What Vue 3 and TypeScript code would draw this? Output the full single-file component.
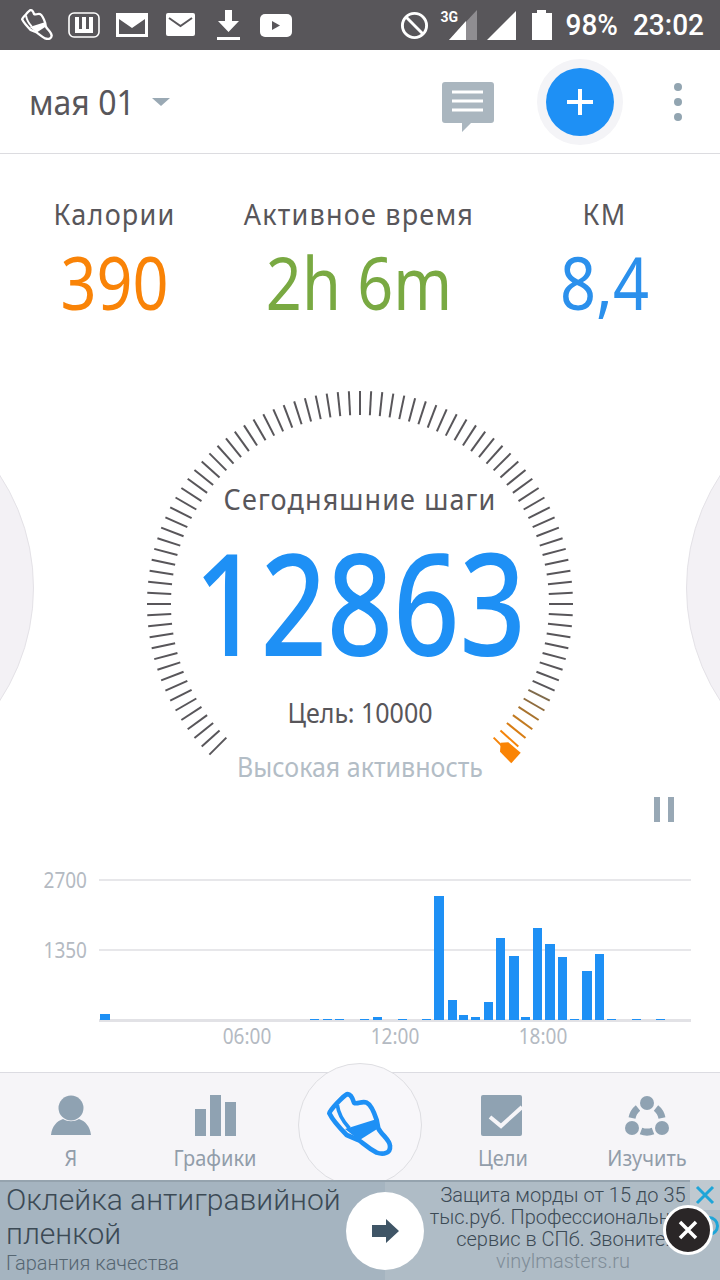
<template>
  <div class="screen">
    <div class="statusbar">
      <div class="status-left">
        <svg width="34" height="34" viewBox="975 90 210 210"><path :d="shoeOutline" fill="none" stroke="#fff" stroke-width="14" stroke-linejoin="round"/><path :d="shoeInner" fill="none" stroke="#fff" stroke-width="12"/><path :d="shoeBand" fill="#fff"/></svg>
        <svg width="32" height="26" viewBox="0 0 32 26"><rect x="1" y="1" width="30" height="24" rx="5" fill="none" stroke="#fff" stroke-width="1.6"/><path d="M7 5h4v12h3V5h4v12h3V5h4v16H7z" fill="#fff"/></svg>
        <svg width="32" height="24" viewBox="0 0 32 24"><path d="M0 0h32v24H0z" fill="#fff"/><path d="M3 6l13 9 13-9v15H3z" fill="#58565a"/></svg>
        <svg width="29" height="24" viewBox="0 0 29 24"><rect width="29" height="23" rx="2" fill="#fff"/><path d="M3 5l11.500 8L26 5" fill="none" stroke="#58565a" stroke-width="2"/></svg>
        <svg width="24" height="31" viewBox="0 0 24 31"><path d="M8 0h7v11h7L11.500 22 1 11h7z" fill="#fff"/><rect y="27" width="23" height="3" fill="#fff"/></svg>
        <svg width="32" height="23" viewBox="0 0 32 23"><rect width="32" height="23" rx="5" fill="#fff"/><path d="M12 7l8 4.500-8 4.500z" fill="#58565a"/></svg>
      </div>
      <div class="status-right">
        <svg class="no-sign" width="29" height="29" viewBox="0 0 30 30"><circle cx="15" cy="15" r="12.500" fill="none" stroke="#fff" stroke-width="3"/><path d="M6 6l18 18" stroke="#fff" stroke-width="3"/></svg>
        <div class="net">
          <span class="net-label">3G</span>
          <svg width="28" height="30" viewBox="0 0 28 30"><path d="M28 0v30H0z" fill="#8f8d91"/><path d="M17 11v19H0z" fill="#fff"/></svg>
        </div>
        <svg class="sig" width="29" height="29" viewBox="0 0 29 29"><path d="M29 0v29H0z" fill="#fff"/></svg>
        <svg class="bat" width="20" height="30" viewBox="0 0 20 30"><path d="M5 0h9v3h6v27H0V3h5z" fill="#fff"/></svg>
        <span class="s-text pct">98%</span>
        <span class="s-text time">23:02</span>
      </div>
    </div>

    <header class="topbar">
      <div class="date">
        <span class="date-text">мая 01</span>
        <i class="caret"></i>
      </div>
      <div class="actions">
        <svg class="comment" width="52" height="50" viewBox="0 0 52 50"><path d="M3 0h46a3 3 0 0 1 3 3v35a3 3 0 0 1-3 3H29l-9 9v-9H3a3 3 0 0 1-3-3V3a3 3 0 0 1 3-3z" fill="#aab6bf"/><path d="M10 10h31M10 19h31M10 28h31" stroke="#fff" stroke-width="3"/></svg>
        <button class="fab"><span class="fab-h"></span><span class="fab-v"></span></button>
        <div class="dots"><i></i><i></i><i></i></div>
      </div>
    </header>

    <section class="stats">
      <div v-for="s in stats" :key="s.label" class="stat" :style="{ width: s.w + 'px' }">
        <span class="stat-label">{{ s.label }}</span>
        <span class="stat-value" :style="{ color: s.color }">{{ s.value }}</span>
      </div>
    </section>

    <section class="gauge">
      <i class="side side-l"></i>
      <i class="side side-r"></i>
      <svg class="dial" width="440" height="400" viewBox="0 0 440 400">
        <line v-for="t in ticks" :key="t.k" :x1="t.x1" :y1="t.y1" :x2="t.x2" :y2="t.y2" :stroke="t.c" stroke-width="2" />
        <path d="M360.700 352.700 368.300 352.300 380.700 362.700 371.300 373.300 360 361.700z" fill="#fa8405" />
      </svg>
      <div class="gauge-text">
        <span class="g-title">Сегодняшние шаги</span>
        <span class="g-steps">12863</span>
        <span class="g-goal">Цель: 10000</span>
        <span class="g-level">Высокая активность</span>
      </div>
    </section>

    <div class="pause-row"><i></i><i></i></div>

    <section class="chart">
      <div class="plot">
        <div class="grid-line"><span>2700</span></div>
        <div class="grid-line"><span>1350</span></div>
        <div class="bars">
          <i v-for="b in bars" :key="b.x" :style="{ left: b.x + 'px', width: b.w + 'px', height: b.h + 'px' }"></i>
        </div>
      </div>
      <div class="hours"><span>06:00</span><span>12:00</span><span>18:00</span></div>
    </section>

    <nav class="tabs">
      <div class="tab">
        <svg width="42" height="41" viewBox="0 0 42 41"><circle cx="21" cy="13" r="12.500" fill="#8fa2b2"/><path d="M1 40c1-9 6-14 12-16 5 3 11 3 16 0 6 2 11 7 12 16z" fill="#8fa2b2"/></svg>
        <span>Я</span>
      </div>
      <div class="tab">
        <svg width="42" height="41" viewBox="0 0 42 41"><path d="M1 14h11v27H1zM16 0h11v41H16zM31 7h11v34H31z" fill="#8fa2b2"/></svg>
        <span>Графики</span>
      </div>
      <div class="tab tab-main">
        <div class="main-circle">
          <svg width="70" height="70" viewBox="975 90 210 210"><path :d="shoeOutline" fill="none" stroke="#1e90f5" stroke-width="14" stroke-linejoin="round"/><path :d="shoeInner" fill="none" stroke="#1e90f5" stroke-width="11"/><path :d="shoeBand" fill="#1e90f5"/></svg>
        </div>
      </div>
      <div class="tab tab-goal">
        <svg width="42" height="41" viewBox="0 0 42 41"><rect x="1" width="41" height="41" rx="2" fill="#8fa2b2"/><path d="M10 22l11 9L42 12" fill="none" stroke="#f6f5f8" stroke-width="4"/></svg>
        <span>Цели</span>
      </div>
      <div class="tab tab-learn">
        <svg width="44" height="41" viewBox="0 0 44 41"><circle cx="22" cy="8" r="7" fill="#8fa2b2"/><circle cx="7" cy="33" r="7" fill="#8fa2b2"/><circle cx="37" cy="33" r="7" fill="#8fa2b2"/><path d="M13 13a17 17 0 0 0-6 10M31 13a17 17 0 0 1 6 10M16 36a17 17 0 0 0 12 0" fill="none" stroke="#8fa2b2" stroke-width="7"/></svg>
        <span>Изучить</span>
      </div>
    </nav>

    <aside class="ad">
      <div class="ad-left">
        <div class="ad-head">Оклейка антигравийной пленкой</div>
        <div class="ad-sub">Гарантия качества</div>
      </div>
      <div class="ad-go">
        <svg width="28" height="24" viewBox="0 0 28 24"><path d="M0 6h14V0l13 12-13 12v-6H0z" fill="#3f5566"/></svg>
      </div>
      <div class="ad-right">
        <div class="ad-copy">Защита морды от 15 до 35 тыс.руб. Профессиональный сервис в СПб. Звоните!</div>
        <div class="ad-url">vinylmasters.ru</div>
      </div>
      <div class="ad-corner">
        <svg width="20" height="20" viewBox="0 0 20 20"><path d="M2 2l16 16M18 2L2 18" stroke="#1ea5d8" stroke-width="3"/></svg>
      </div>
      <i class="ad-info"></i>
      <div class="close">
        <svg width="22" height="22" viewBox="0 0 22 22"><path d="M3 3l16 16M19 3L3 19" stroke="#fff" stroke-width="3.500"/></svg>
      </div>
    </aside>
  </div>
</template>

<script setup lang="ts">
const stats = [
  { label: 'Калории', value: '390', color: '#f98307', w: 229 },
  { label: 'Активное время', value: '2h 6m', color: '#79a942', w: 260 },
  { label: 'КМ', value: '8,4', color: '#2b90ec', w: 231 }
]

// shoe coordinates are taken at 3x, hence the odd viewBox
const shoeOutline = 'M988 160C990 150 1030 108 1040 103C1052 100 1058 115 1062 128C1070 135 1085 122 1100 128C1115 135 1125 165 1130 180L1135 205C1145 225 1170 240 1170 258C1172 280 1150 285 1130 278C1100 262 1085 245 1075 240L1040 225C1020 205 1000 185 988 160Z'
const shoeInner = 'M1012 135C1015 160 1030 185 1048 205'
const shoeBand = 'M1035 207 1128 178 1135 205 1078 241Z'

// 91 ticks over 270 degrees, the last few fade into orange
const ticks = Array.from({ length: 91 }, (_, i) => {
  const a = ((135 + i * 3) * Math.PI) / 180
  const cx = 220
  const cy = 214
  const left = 90 - i
  let c = '#58565a'
  if (left === 6) c = '#7f6b4c'
  if (left === 5) c = '#8f6c3e'
  if (left === 4) c = '#a8732e'
  if (left === 3) c = '#c27a20'
  if (left === 2) c = '#d87d14'
  if (left <= 1) c = '#f5840a'
  return {
    k: i,
    x1: cx + Math.cos(a) * 189,
    y1: cy + Math.sin(a) * 189,
    x2: cx + Math.cos(a) * 213,
    y2: cy + Math.sin(a) * 213,
    c
  }
})

// x relative to the plot, h in px above the axis
const bars = [
  { x: 1, w: 10, h: 6 },
  { x: 211, w: 9, h: 1 }, { x: 224, w: 9, h: 1 }, { x: 236, w: 9, h: 1 },
  { x: 261, w: 9, h: 1 }, { x: 274, w: 9, h: 3 }, { x: 299, w: 9, h: 1 },
  { x: 323, w: 9, h: 1 },
  { x: 335, w: 10, h: 124 }, { x: 349, w: 9, h: 20 }, { x: 360, w: 9, h: 5 },
  { x: 372, w: 9, h: 3 }, { x: 385, w: 9, h: 18 }, { x: 397, w: 9, h: 82 },
  { x: 410, w: 10, h: 64 }, { x: 422, w: 9, h: 3 }, { x: 434, w: 9, h: 92 },
  { x: 446, w: 10, h: 76 }, { x: 459, w: 9, h: 63 }, { x: 471, w: 9, h: 1 },
  { x: 483, w: 10, h: 49 }, { x: 496, w: 9, h: 66 }, { x: 508, w: 9, h: 1 },
  { x: 533, w: 9, h: 1 }, { x: 557, w: 9, h: 1 }
]
</script>

<style>
body {
  background: #fff;
}
</style>

<style scoped>
.screen {
  width: 720px;
  height: 1280px;
  overflow: hidden;
  display: flex;
  flex-direction: column;
  position: relative;
  background: #fff;
  font-family: "Noto Sans", "Open Sans", sans-serif;
  color: #58565a;
}
.statusbar {
  height: 50px;
  flex: none;
  background: #58565a;
  display: flex;
  justify-content: space-between;
  align-items: center;
  padding: 0 16px 0 20px;
}
.status-left {
  display: flex;
  align-items: center;
}
.status-left svg:nth-child(2) { margin-left: 14px; }
.status-left svg:nth-child(3) { margin-left: 16px; }
.status-left svg:nth-child(4) { margin-left: 18px; }
.status-left svg:nth-child(5) { margin-left: 22px; }
.status-left svg:nth-child(6) { margin-left: 19px; }
.status-right {
  display: flex;
  align-items: center;
  color: #fff;
}
.net {
  position: relative;
  width: 28px;
  height: 30px;
  margin-left: 20px;
}
.net-label {
  position: absolute;
  left: -8px;
  top: -1px;
  font: 700 14px "Roboto", sans-serif;
}
.sig { margin-left: 10px; }
.bat { margin-left: 16px; }
.s-text {
  font: 500 28px "Roboto", sans-serif;
  transform: scaleY(1.05);
}
.pct { margin-left: 14px; }
.time { margin-left: 15px; }
.topbar {
  height: 104px;
  flex: none;
  box-sizing: border-box;
  border-bottom: 1px solid #dcdce0;
  display: flex;
  align-items: center;
  justify-content: space-between;
  padding: 0 38px 0 29px;
}
.date {
  display: flex;
  align-items: center;
  gap: 17px;
  font-size: 32px;
}
.date-text {
  transform: scaleY(1.08);
}
.caret {
  width: 0;
  height: 0;
  border: 9px solid transparent;
  border-top: 8px solid #9aa9b4;
  border-bottom: 0;
}
.actions {
  display: flex;
  align-items: center;
}
.comment {
  margin-top: 10px;
}
.fab {
  position: relative;
  width: 68px;
  height: 68px;
  padding: 0;
  margin: 0 60px 0 52px;
  border: 0;
  border-radius: 50%;
  background: #1e90f5;
  box-shadow: 0 0 0 9px #f4f4f7;
}
.fab-h, .fab-v {
  position: absolute;
  background: #fff;
  left: 21px;
  top: 32px;
  width: 26px;
  height: 4px;
}
.fab-v {
  left: 32px;
  top: 21px;
  width: 4px;
  height: 26px;
}
.dots {
  display: flex;
  flex-direction: column;
  gap: 7px;
}
.dots i {
  width: 8px;
  height: 8px;
  border-radius: 50%;
  background: #92a5b1;
}
.stats {
  flex: none;
  display: flex;
  padding-top: 41px;
  height: 190px;
  box-sizing: border-box;
}
.stat {
  display: flex;
  flex-direction: column;
  align-items: center;
}
.stat-label {
  font-size: 27px;
  line-height: 38px;
  letter-spacing: 1.200px;
  transform: scaleY(1.08);
}
.stat-value {
  font-size: 63px;
  line-height: 56px;
  margin-top: 21px;
  transform: scaleY(1.17);
}
.gauge {
  position: relative;
  flex: none;
  height: 444px;
  display: grid;
  justify-items: center;
}
.dial, .gauge-text {
  grid-area: 1 / 1;
}
.dial {
  margin-top: 46px;
}
.side {
  position: absolute;
  top: 38px;
  width: 412px;
  height: 412px;
  box-sizing: border-box;
  border-radius: 50%;
  border: 1px solid #e4e2e7;
  background: #f3f1f5;
}
.side-l {
  left: -378px;
}
.side-r {
  right: -378px;
}
.gauge-text {
  z-index: 1;
  display: flex;
  flex-direction: column;
  align-items: center;
  padding-top: 136px;
}
.g-title {
  font-size: 27px;
  line-height: 38px;
  letter-spacing: 1.100px;
  transform: scaleY(1.08);
}
.g-steps {
  font-size: 116px;
  font-weight: 500;
  line-height: 110px;
  color: #1e90f5;
  margin-top: 28px;
  transform: scaleY(1.23);
}
.g-goal {
  font-size: 25px;
  line-height: 36px;
  margin-top: 38px;
  transform: scaleY(1.08);
}
.g-level {
  font-size: 25px;
  line-height: 36px;
  color: #b3bdc6;
  margin-top: 18px;
  transform: scaleY(1.08);
}
.pause-row {
  flex: none;
  height: 70px;
  box-sizing: border-box;
  padding: 9px 46px 0 0;
  display: flex;
  justify-content: flex-end;
  gap: 8px;
}
.pause-row i {
  width: 6px;
  height: 25px;
  background: #98a8b5;
}
.chart {
  flex: none;
  height: 214px;
  box-sizing: border-box;
  padding: 21px 29px 0 99px;
}
.plot {
  position: relative;
  height: 140px;
  border-bottom: 3px solid #e2e2e6;
  box-sizing: content-box;
}
.grid-line {
  height: 70px;
  border-top: 2px solid #e7e7ea;
  box-sizing: border-box;
  position: relative;
}
.grid-line span {
  position: absolute;
  right: 100%;
  top: -14px;
  margin-right: 12px;
  font-size: 19px;
  line-height: 26px;
  color: #b4bac2;
  transform: scaleY(1.12);
}
.bars {
  position: absolute;
  inset: 0 0 -1px 0;
}
.bars i {
  position: absolute;
  bottom: 0;
  background: #1e90f5;
}
.hours {
  display: flex;
  padding-left: 74px;
  font-size: 19px;
  line-height: 28px;
  color: #b4bac2;
}
.hours span {
  width: 148px;
  flex: none;
  text-align: center;
  transform: scaleY(1.12);
}
.tabs {
  flex: none;
  height: 108px;
  box-sizing: border-box;
  background: #f6f5f8;
  border-top: 1px solid #dcdce2;
  display: flex;
  padding-top: 22px;
}
.tab {
  width: 144px;
  flex: none;
  display: flex;
  flex-direction: column;
  align-items: center;
  font-size: 20px;
  color: #929daa;
}
.tab:first-child {
  margin-left: -1px;
}
.tab span {
  line-height: 28px;
  margin-top: 8px;
  transform: scaleY(1.1);
}
.tab-main {
  width: 124px;
  position: relative;
  margin: 0 7px 0 11px;
}
.tab-goal span {
  margin-left: 4px;
}
.tab-learn {
  margin-left: 2px;
}
.main-circle {
  position: absolute;
  top: -32px;
  left: 0;
  width: 124px;
  height: 124px;
  box-sizing: border-box;
  border-radius: 50%;
  border: 1px solid #dedee2;
  background: #f8f7fa;
  display: flex;
  align-items: center;
  justify-content: center;
}
.ad {
  flex: none;
  height: 100px;
  position: relative;
  background: #a5b4c0;
  box-shadow: inset 0 2px 0 #95a3ae;
  display: flex;
  font-family: "Roboto", sans-serif;
  font-weight: 300;
  color: #3c4a55;
}
.ad-left {
  width: 346px;
  flex: none;
  box-sizing: border-box;
  padding: 3px 0 0 6px;
}
.ad-head {
  font-size: 30px;
  line-height: 34px;
}
.ad-sub {
  font-size: 20px;
  line-height: 24px;
  color: #566672;
}
.ad-go {
  position: absolute;
  left: 346px;
  top: 12px;
  width: 78px;
  height: 78px;
  border-radius: 50%;
  background: #fff;
  display: flex;
  align-items: center;
  justify-content: center;
  z-index: 1;
  padding-left: 2px;
  box-sizing: border-box;
}
.ad-right {
  margin: 2px 0 0 39px;
  flex: 1;
  background: #afbcc6;
  padding: 2px 18px 0 39px;
  text-align: center;
  font-size: 20px;
  line-height: 22px;
}
.ad-url {
  color: #7f8d98;
}
.ad-corner {
  position: absolute;
  right: 0;
  top: 0;
  width: 30px;
  height: 30px;
  background: #c0c9d0;
  display: flex;
  align-items: center;
  justify-content: center;
}
.ad-info {
  position: absolute;
  right: 1px;
  top: 36px;
  width: 20px;
  height: 20px;
  box-sizing: border-box;
  border-radius: 50%;
  border: 3px solid #1ea5d8;
}
.close {
  position: absolute;
  right: 7px;
  top: 25px;
  width: 50px;
  height: 50px;
  box-sizing: border-box;
  border-radius: 50%;
  background: #2a2627;
  border: 3px solid #fff;
  display: flex;
  align-items: center;
  justify-content: center;
}
</style>
